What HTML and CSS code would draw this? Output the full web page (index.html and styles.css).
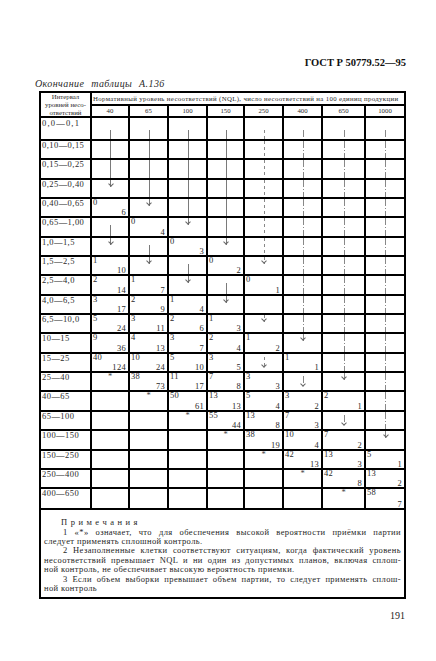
FILE: index.html
```html
<!DOCTYPE html>
<html lang="ru">
<head>
<meta charset="utf-8">
<title>ГОСТ Р 50779.52—95</title>
<link rel="stylesheet" href="styles.css">
</head>
<body>
<div class="page">
  <div class="gost">ГОСТ Р 50779.52—95</div>
  <div class="caption">Окончание таблицы А.136</div>
  <div class="tbl">
    <div class="hd hint">Интервал<br>уровней несо-<br>ответствий</div>
    <div class="hd hnql">Нормативный уровень несоответствий (NQL), число несоответствий на 100 единиц продукции</div>
    <div class="hd hc">40</div><div class="hd hc">65</div><div class="hd hc">100</div><div class="hd hc">150</div><div class="hd hc">250</div><div class="hd hc">400</div><div class="hd hc">650</div><div class="hd hc">1000</div>

    <div class="lb w">0,0—0,1</div>
    <div class="ln top"></div><div class="ln top"></div><div class="ln top"></div><div class="ln top"></div><div class="ln top d1"></div><div class="ln top d2"></div><div class="ln top d2"></div><div class="ln top d2"></div>

    <div class="lb">0,10—0,15</div>
    <div class="ln"></div><div class="ln"></div><div class="ln"></div><div class="ln"></div><div class="ln d1"></div><div class="ln d2"></div><div class="ln d2"></div><div class="ln d2"></div>

    <div class="lb">0,15—0,25</div>
    <div class="ln"></div><div class="ln"></div><div class="ln"></div><div class="ln"></div><div class="ln d1"></div><div class="ln d2"></div><div class="ln d2"></div><div class="ln d2"></div>

    <div class="lb">0,25—0,40</div>
    <div class="ln end"></div><div class="ln"></div><div class="ln"></div><div class="ln"></div><div class="ln d1"></div><div class="ln d2"></div><div class="ln d2"></div><div class="ln d2"></div>

    <div class="lb">0,40—0,65</div>
    <div class="c"><span>0</span><span class="b">6</span></div><div class="ln end"></div><div class="ln"></div><div class="ln"></div><div class="ln d1"></div><div class="ln d2"></div><div class="ln d2"></div><div class="ln d2"></div>

    <div class="lb">0,65—1,00</div>
    <div class="ln beg"></div><div class="c"><span>0</span><span class="b">4</span></div><div class="ln end"></div><div class="ln"></div><div class="ln d1"></div><div class="ln d2"></div><div class="ln d2"></div><div class="ln d2"></div>

    <div class="lb">1,0—1,5</div>
    <div class="ln end"></div><div class="ln beg"></div><div class="c"><span>0</span><span class="b">3</span></div><div class="ln end"></div><div class="ln d1"></div><div class="ln d2"></div><div class="ln d2"></div><div class="ln d2"></div>

    <div class="lb">1,5—2,5</div>
    <div class="c"><span>1</span><span class="b">10</span></div><div class="ln end"></div><div class="ln beg"></div><div class="c"><span>0</span><span class="b">2</span></div><div class="ln end d1"></div><div class="ln d2"></div><div class="ln d2"></div><div class="ln d2"></div>

    <div class="lb">2,5—4,0</div>
    <div class="c"><span>2</span><span class="b">14</span></div><div class="c"><span>1</span><span class="b">7</span></div><div class="ln end"></div><div class="ln beg"></div><div class="c"><span>0</span><span class="b">1</span></div><div class="ln d2"></div><div class="ln d2"></div><div class="ln d2"></div>

    <div class="lb">4,0—6,5</div>
    <div class="c"><span>3</span><span class="b">17</span></div><div class="c"><span>2</span><span class="b">9</span></div><div class="c"><span>1</span><span class="b">4</span></div><div class="ln end"></div><div></div><div class="ln d2"></div><div class="ln d2"></div><div class="ln d2"></div>

    <div class="lb">6,5—10,0</div>
    <div class="c"><span>5</span><span class="b">24</span></div><div class="c"><span>3</span><span class="b">11</span></div><div class="c"><span>2</span><span class="b">6</span></div><div class="c"><span>1</span><span class="b">3</span></div><div class="ln end d1"></div><div class="ln d2"></div><div class="ln d2"></div><div class="ln d2"></div>

    <div class="lb">10—15</div>
    <div class="c"><span>9</span><span class="b">36</span></div><div class="c"><span>4</span><span class="b">13</span></div><div class="c"><span>3</span><span class="b">7</span></div><div class="c"><span>2</span><span class="b">4</span></div><div class="c"><span>1</span><span class="b">2</span></div><div class="ln end d2"></div><div class="ln d2"></div><div class="ln d2"></div>

    <div class="lb">15—25</div>
    <div class="c"><span>40</span><span class="b">124</span></div><div class="c"><span>10</span><span class="b">24</span></div><div class="c"><span>5</span><span class="b">10</span></div><div class="c"><span>3</span><span class="b">5</span></div><div class="ln one d1"></div><div class="c"><span>1</span><span class="b">1</span></div><div class="ln d2"></div><div class="ln d2"></div>

    <div class="lb">25—40</div>
    <div class="st">*</div><div class="c"><span>38</span><span class="b">73</span></div><div class="c"><span>11</span><span class="b">17</span></div><div class="c"><span>7</span><span class="b">8</span></div><div class="c"><span>3</span><span class="b">3</span></div><div class="ln one d2"></div><div class="ln end d2"></div><div class="ln d2"></div>

    <div class="lb">40—65</div>
    <div></div><div class="st">*</div><div class="c"><span>50</span><span class="b">61</span></div><div class="c"><span>13</span><span class="b">13</span></div><div class="c"><span>5</span><span class="b">4</span></div><div class="c"><span>3</span><span class="b">2</span></div><div class="c"><span>2</span><span class="b">1</span></div><div class="ln d2"></div>

    <div class="lb">65—100</div>
    <div></div><div></div><div class="st">*</div><div class="c"><span>55</span><span class="b">44</span></div><div class="c"><span>13</span><span class="b">8</span></div><div class="c"><span>7</span><span class="b">3</span></div><div class="ln one d2"></div><div class="ln d2"></div>

    <div class="lb">100—150</div>
    <div></div><div></div><div></div><div class="st">*</div><div class="c"><span>38</span><span class="b">19</span></div><div class="c"><span>10</span><span class="b">4</span></div><div class="c"><span>7</span><span class="b">2</span></div><div class="ln end d2"></div>

    <div class="lb">150—250</div>
    <div></div><div></div><div></div><div></div><div class="st">*</div><div class="c"><span>42</span><span class="b">13</span></div><div class="c"><span>13</span><span class="b">3</span></div><div class="c"><span>5</span><span class="b">1</span></div>

    <div class="lb">250—400</div>
    <div></div><div></div><div></div><div></div><div></div><div class="st">*</div><div class="c"><span>42</span><span class="b">8</span></div><div class="c"><span>13</span><span class="b">2</span></div>

    <div class="lb">400—650</div>
    <div></div><div></div><div></div><div></div><div></div><div></div><div class="st">*</div><div class="c"><span>58</span><span class="b">7</span></div>

    <div class="notes">
      <p class="ttl">Примечания</p>
      <p><span class="j ind">1 «*» означает, что для обеспечения высокой вероятности приёмки партии</span><span>следует применять сплошной контроль.</span></p>
      <p><span class="j ind">2 Незаполненные клетки соответствуют ситуациям, когда фактический уровень</span><span class="j">несоответствий превышает NQL и ни один из допустимых планов, включая сплош-</span><span>ной контроль, не обеспечивает высокую вероятность приемки.</span></p>
      <p><span class="j ind">3 Если объем выборки превышает объем партии, то следует применять сплош-</span><span>ной контроль</span></p>
    </div>
  </div>
  <div class="pno">191</div>
</div>
</body>
</html>
```

FILE: styles.css
```css
* { box-sizing: border-box; }
html, body { margin: 0; padding: 0; background: #fff; }
body { font-family: "Liberation Serif", "DejaVu Serif", serif; color: #222; }

.page { width: 436px; height: 661px; padding: 0 30px 0 39px; overflow: hidden; }

.gost { padding-top: 57px; text-align: right; font-weight: bold; font-size: 10.5px; line-height: 12px; color: #111; }
.caption { margin: 9px 0 1px -4px; font-style: italic; font-size: 10px; line-height: 12px; word-spacing: 4px; letter-spacing: 0.4px; color: #2a2a2a; }

.tbl {
  display: grid;
  grid-template-columns: 49px 36px 37px 37px 35px 37px 37px 41px 38px;
  grid-template-rows: 11px 10px 21px repeat(18, 17.35px) 19px 87px;
  gap: 2px;
  padding: 2px;
  width: 367px;
  background: #000;
}
.tbl > div { background: #fff; position: relative; min-width: 0; }

.hd { font-size: 6.8px; color: #2a2a2a; }
.hint { grid-row: 1 / 3; text-align: center; line-height: 8px; }
.hnql { grid-column: 2 / 10; line-height: 11px; padding-left: 1px; white-space: nowrap; letter-spacing: 0.35px; }
.hc { text-align: center; line-height: 10px; }

.lb { font-size: 8.5px; line-height: 8px; letter-spacing: 0.45px; padding-left: 1px; color: #2a2a2a; white-space: nowrap; }
.lb.w { letter-spacing: 1.2px; padding-top: 1px; }

.c { display: flex; flex-direction: column; justify-content: space-between; font-size: 8.5px; line-height: 7px; padding: 0 2px 0 1px; color: #2a2a2a; letter-spacing: 0.3px; }
.c .b { align-self: flex-end; }
.st { text-align: center; font-size: 8.5px; line-height: 7px; color: #444; }

.ln::before { content: ""; position: absolute; left: 50%; width: 1px; top: 0; bottom: 0; background: #7a7a7a; }
.ln.d1::before { background: repeating-linear-gradient(to bottom, #888 0 3px, transparent 3px 6px); }
.ln.d2::before { background: repeating-linear-gradient(to bottom, #888 0 7px, transparent 7px 9px, #888 9px 10px, transparent 10px 12px); }
.ln.top::before { top: 12px; }
.ln.beg::before { top: 7px; }
.ln.end::before { bottom: auto; height: 7px; }
.ln.one::before { top: 3px; bottom: auto; height: 11px; }
.ln.end::after, .ln.one::after {
  content: ""; position: absolute; left: 50%; margin-left: -1.5px; top: 2px;
  width: 3px; height: 3px; border-right: 1px solid #666; border-bottom: 1px solid #666;
  transform: rotate(45deg);
}
.ln.one::after { top: 9px; }

.notes { grid-column: 1 / 10; padding: 8px 3px 0 3px; font-size: 8.5px; line-height: 9.4px; letter-spacing: 0.4px; color: #1e1e1e; }
.notes p { margin: 0; }
.notes span { display: block; }
.notes .j { text-align: justify; text-align-last: justify; }
.notes .ind { text-indent: 19px; }
.notes .ttl { letter-spacing: 3.5px; text-indent: 17px; }

.pno { margin-top: 10.7px; margin-right: 1px; text-align: right; font-size: 10px; line-height: 12px; color: #222; }
```
